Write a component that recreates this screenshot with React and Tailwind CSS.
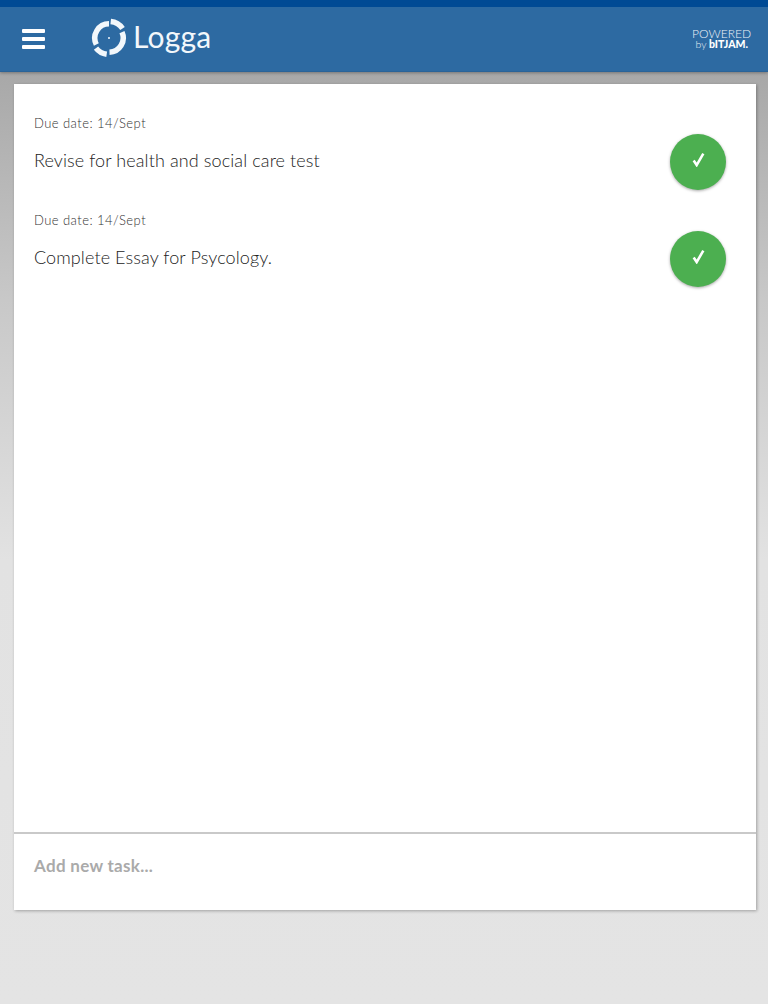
const arc = (cx, cy, r, a, b) => {
  const p = (d) => [cx + r * Math.sin((d * Math.PI) / 180), cy - r * Math.cos((d * Math.PI) / 180)];
  const [x1, y1] = p(a);
  const [x2, y2] = p(b);
  return `M${x1.toFixed(2)} ${y1.toFixed(2)}A${r} ${r} 0 ${b - a > 180 ? 1 : 0} 1 ${x2.toFixed(2)} ${y2.toFixed(2)}`;
};

function Logo() {
  return (
    <svg width="36" height="42" viewBox="0 0 36 42" fill="none" stroke="#f2f7fb" strokeWidth="5.5">
      <path d={arc(18, 21, 16.5, 6, 55)} />
      <path d={arc(18, 21, 14.2, 66, 178)} />
      <path d={arc(18, 21, 16.5, 188, 232)} />
      <path d={arc(18, 21, 14.2, 243, 360)} />
      <circle cx="18" cy="21" r="1" fill="#f2f7fb" stroke="none" />
    </svg>
  );
}

function Task({ title }) {
  return (
    <div className="flex h-[97px] items-start justify-between pl-5 pr-[30px]">
      <div>
        <div className="mt-[31px] text-[13px] leading-4 font-light tracking-[0.45px] text-[#333]">Due date: 14/Sept</div>
        <div className="mt-[17px] text-[18px] leading-6 font-light tracking-[0.1px] text-[#222]">{title}</div>
      </div>
      <button className="mt-[50px] flex h-14 w-14 items-center justify-center rounded-full bg-[#4caf50] text-white shadow-[0_1px_3px_rgba(0,0,0,0.35)]">
        <svg className="mt-[-5px]" width="15" height="15" viewBox="0 0 14 14" fill="none" stroke="#fff" strokeWidth="2.4">
          <path d="M2.5 8l2.8 4.2L11.5 1.5" />
        </svg>
      </button>
    </div>
  );
}

export default function App() {
  return (
    <div className="flex h-[1004px] flex-col overflow-hidden bg-[linear-gradient(#a8a8a8_72px,#c8c8c8_300px,#e2e2e2_560px,#e4e4e4)] font-['Lato','Liberation_Sans',sans-serif]">
      <header className="flex h-[72px] shrink-0 items-center justify-between border-t-[7px] border-b border-t-[#004a94] border-b-[#2a6398] bg-[#2d6aa2] pl-[22px] pr-[17px] shadow-[0_1px_3px_rgba(0,0,0,0.3)]">
        <div className="flex items-center">
          <div className="mt-[-1px] flex w-[23px] flex-col gap-[4px]">
            <span className="h-[4px] rounded-[1px] bg-white" />
            <span className="h-[4px] rounded-[1px] bg-white" />
            <span className="h-[4px] rounded-[1px] bg-white" />
          </div>
          <div className="ml-[46px] mt-[-2px]"><Logo /></div>
          <span className="ml-[6px] mt-[-6px] text-[30px] leading-none tracking-[0.2px] text-[#f2f7fb]">Logga</span>
        </div>
        <div className="mt-[-1px] flex flex-col items-end text-[#eef3f8]">
          <span className="text-[12px] leading-[10px] font-light">POWERED</span>
          <span className="mr-[3px] text-[10.5px] leading-[10px] font-light">by <b className="font-black text-white">bITJAM.</b></span>
        </div>
      </header>
      <main className="ml-[14px] mr-[12px] mt-3 flex h-[826px] flex-col bg-white shadow-[1px_1px_3px_rgba(0,0,0,0.3)]">
        <div className="min-h-0 flex-1">
          <Task title="Revise for health and social care test" />
          <Task title="Complete Essay for Psycology." />
        </div>
        <div className="flex h-[78px] shrink-0 items-start border-t-2 border-[#c9c9c9] pl-5 pt-[22px] text-[17px] leading-[20px] font-bold tracking-[0.3px] text-[#aaa]">
          Add new task...
        </div>
      </main>
    </div>
  );
}
